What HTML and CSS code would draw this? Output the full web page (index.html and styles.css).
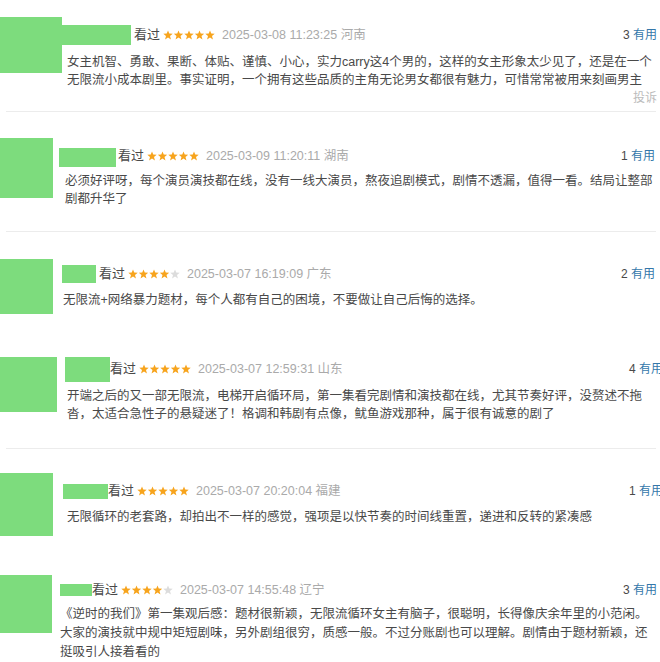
FILE: index.html
```html
<!DOCTYPE html>
<html lang="zh-CN">
<head>
<meta charset="utf-8">
<title>短评</title>
<link rel="stylesheet" href="styles.css">
</head>
<body>
<svg class="defs" width="0" height="0" aria-hidden="true">
  <symbol id="star" viewBox="0 0 10 10">
    <path d="M5 0.4 L6.25 3.6 L9.7 3.75 L7 5.95 L7.95 9.4 L5 7.45 L2.05 9.4 L3 5.95 L0.3 3.75 L3.75 3.6 Z"/>
  </symbol>
</svg>

<div class="list">
  <div class="card c1 sep">
    <div class="avatar"></div>
    <div class="body">
      <div class="meta">
        <span class="name"></span>
        <span class="status">看过</span>
        <svg class="stars" width="52" height="10" viewBox="0 0 52 10"><use href="#star" x="0" width="10" height="10" class="on"/><use href="#star" x="10.5" width="10" height="10" class="on"/><use href="#star" x="21" width="10" height="10" class="on"/><use href="#star" x="31.5" width="10" height="10" class="on"/><use href="#star" x="42" width="10" height="10" class="on"/></svg>
        <span class="time">2025-03-08 11:23:25 河南</span>
        <span class="votes">3 <em>有用</em></span>
      </div>
      <p class="text">女主机智、勇敢、果断、体贴、谨慎、小心，实力carry这4个男的，这样的女主形象太少见了，还是在一个<br>无限流小成本剧里。事实证明，一个拥有这些品质的主角无论男女都很有魅力，可惜常常被用来刻画男主</p>
      <div class="report">投诉</div>
    </div>
  </div>

  <div class="card c2 sep">
    <div class="avatar"></div>
    <div class="body">
      <div class="meta">
        <span class="name"></span>
        <span class="status">看过</span>
        <svg class="stars" width="52" height="10" viewBox="0 0 52 10"><use href="#star" x="0" width="10" height="10" class="on"/><use href="#star" x="10.5" width="10" height="10" class="on"/><use href="#star" x="21" width="10" height="10" class="on"/><use href="#star" x="31.5" width="10" height="10" class="on"/><use href="#star" x="42" width="10" height="10" class="on"/></svg>
        <span class="time">2025-03-09 11:20:11 湖南</span>
        <span class="votes">1 <em>有用</em></span>
      </div>
      <p class="text">必须好评呀，每个演员演技都在线，没有一线大演员，熬夜追剧模式，剧情不透漏，值得一看。结局让整部<br>剧都升华了</p>
    </div>
  </div>

  <div class="card c3">
    <div class="avatar"></div>
    <div class="body">
      <div class="meta">
        <span class="name"></span>
        <span class="status">看过</span>
        <svg class="stars" width="52" height="10" viewBox="0 0 52 10"><use href="#star" x="0" width="10" height="10" class="on"/><use href="#star" x="10.5" width="10" height="10" class="on"/><use href="#star" x="21" width="10" height="10" class="on"/><use href="#star" x="31.5" width="10" height="10" class="on"/><use href="#star" x="42" width="10" height="10" class="off"/></svg>
        <span class="time">2025-03-07 16:19:09 广东</span>
        <span class="votes">2 <em>有用</em></span>
      </div>
      <p class="text">无限流+网络暴力题材，每个人都有自己的困境，不要做让自己后悔的选择。</p>
    </div>
  </div>

  <div class="card c4 sep">
    <div class="avatar"></div>
    <div class="body">
      <div class="meta">
        <span class="name"></span>
        <span class="status">看过</span>
        <svg class="stars" width="52" height="10" viewBox="0 0 52 10"><use href="#star" x="0" width="10" height="10" class="on"/><use href="#star" x="10.5" width="10" height="10" class="on"/><use href="#star" x="21" width="10" height="10" class="on"/><use href="#star" x="31.5" width="10" height="10" class="on"/><use href="#star" x="42" width="10" height="10" class="on"/></svg>
        <span class="time">2025-03-07 12:59:31 山东</span>
        <span class="votes">4 <em>有用</em></span>
      </div>
      <p class="text">开端之后的又一部无限流，电梯开启循环局，第一集看完剧情和演技都在线，尤其节奏好评，没赘述不拖<br>沓，太适合急性子的悬疑迷了！格调和韩剧有点像，鱿鱼游戏那种，属于很有诚意的剧了</p>
    </div>
  </div>

  <div class="card c5">
    <div class="avatar"></div>
    <div class="body">
      <div class="meta">
        <span class="name"></span>
        <span class="status">看过</span>
        <svg class="stars" width="52" height="10" viewBox="0 0 52 10"><use href="#star" x="0" width="10" height="10" class="on"/><use href="#star" x="10.5" width="10" height="10" class="on"/><use href="#star" x="21" width="10" height="10" class="on"/><use href="#star" x="31.5" width="10" height="10" class="on"/><use href="#star" x="42" width="10" height="10" class="on"/></svg>
        <span class="time">2025-03-07 20:20:04 福建</span>
        <span class="votes">1 <em>有用</em></span>
      </div>
      <p class="text">无限循环的老套路，却拍出不一样的感觉，强项是以快节奏的时间线重置，递进和反转的紧凑感</p>
    </div>
  </div>

  <div class="card c6">
    <div class="avatar"></div>
    <div class="body">
      <div class="meta">
        <span class="name"></span>
        <span class="status">看过</span>
        <svg class="stars" width="52" height="10" viewBox="0 0 52 10"><use href="#star" x="0" width="10" height="10" class="on"/><use href="#star" x="10.5" width="10" height="10" class="on"/><use href="#star" x="21" width="10" height="10" class="on"/><use href="#star" x="31.5" width="10" height="10" class="on"/><use href="#star" x="42" width="10" height="10" class="off"/></svg>
        <span class="time">2025-03-07 14:55:48 辽宁</span>
        <span class="votes">3 <em>有用</em></span>
      </div>
      <p class="text">《逆时的我们》第一集观后感：题材很新颖，无限流循环女主有脑子，很聪明，长得像庆余年里的小范闲。<br>大家的演技就中规中矩短剧味，另外剧组很穷，质感一般。不过分账剧也可以理解。剧情由于题材新颖，还<br>挺吸引人接着看的</p>
    </div>
  </div>
</div>
</body>
</html>
```

FILE: styles.css
```css
html, body {
  margin: 0;
  padding: 0;
  background: #fff;
  overflow: hidden;
}

body {
  width: 660px;
  height: 662px;
  font-family: "Liberation Sans", "Noto Sans CJK SC", sans-serif;
  color: #494949;
}

.defs {
  position: absolute;
  width: 0;
  height: 0;
}

.list {
  display: flex;
  flex-direction: column;
}

.card {
  display: flex;
  align-items: flex-start;
  box-sizing: border-box;
  position: relative;
}

.card.sep::after {
  content: "";
  position: absolute;
  left: 6px;
  right: 4px;
  bottom: 0;
  height: 1px;
  background: #ececec;
}

.avatar {
  flex: none;
  background: #7ddc7d;
}

.body {
  flex: 1;
  min-width: 0;
  display: flex;
  flex-direction: column;
}

.meta {
  display: flex;
  align-items: center;
  height: 20px;
  white-space: nowrap;
}

.name {
  flex: none;
  background: #7ddc7d;
}

.status {
  font-size: 13px;
  line-height: 20px;
  color: #494949;
}

.stars {
  flex: none;
  margin-left: 3px;
  margin-top: -1px;
}

.stars .on { fill: #f7a41d; }
.stars .off { fill: #dcdcdc; }

.time {
  margin-left: 7px;
  font-size: 12.5px;
  color: #aaa;
  line-height: 20px;
}

.votes {
  margin-left: auto;
  font-size: 12px;
  color: #494949;
  line-height: 20px;
}

.votes em {
  font-style: normal;
  color: #3377aa;
  font-size: 12px;
}

.text {
  margin: 0;
  font-size: 12.5px;
  line-height: 18px;
  color: #494949;
  white-space: nowrap;
}

.report {
  align-self: flex-end;
  font-size: 12px;
  line-height: 18px;
  color: #bbb;
}

/* card 1 */
.c1 { height: 112px; padding-top: 17px; }
.c1 .avatar { width: 62px; height: 56px; }
.c1 .body { margin: 8px 3px 0 5px; }
.c1 .name { width: 69px; height: 20px; margin-left: -5px; margin-right: 3px; }
.c1 .text { margin-top: 8px; }

/* card 2 */
.c2 { height: 120px; padding-top: 26px; }
.c2 .avatar { width: 53px; height: 60px; }
.c2 .body { margin: 8px 5px 0 12px; }
.c2 .name { width: 57px; height: 19px; margin-left: -6px; margin-right: 2px; margin-top: 3px; }
.c2 .text { margin-top: 6px; }

/* card 3 */
.c3 { height: 108px; padding-top: 27px; }
.c3 .avatar { width: 53px; height: 55px; }
.c3 .body { margin: 5px 5px 0 10px; }
.c3 .name { width: 34px; height: 18px; margin-left: -1px; margin-right: 3px; }
.c3 .text { margin-top: 7px; }

/* card 4 */
.c4 { height: 109px; padding-top: 17px; }
.c4 .avatar { width: 57px; height: 55px; }
.c4 .body { margin: 2px -3px 0 10px; }
.c4 .name { width: 45px; height: 25px; margin-left: -2px; margin-right: 0; }
.c4 .text { margin-top: 8px; }

/* card 5 */
.c5 { height: 111px; padding-top: 24px; }
.c5 .avatar { width: 53px; height: 63px; }
.c5 .body { margin: 8px -3px 0 14px; }
.c5 .name { width: 45px; height: 15px; margin-left: -4px; margin-right: 0; }
.c5 .text { margin-top: 7px; }

/* card 6 */
.c6 { height: 102px; padding-top: 15px; }
.c6 .avatar { width: 52px; height: 58px; }
.c6 .body { margin: 5px 3px 0 8px; }
.c6 .name { width: 32px; height: 12px; margin-left: 0; margin-right: 0; }
.c6 .text { margin-top: 5px; line-height: 19px; }
```
